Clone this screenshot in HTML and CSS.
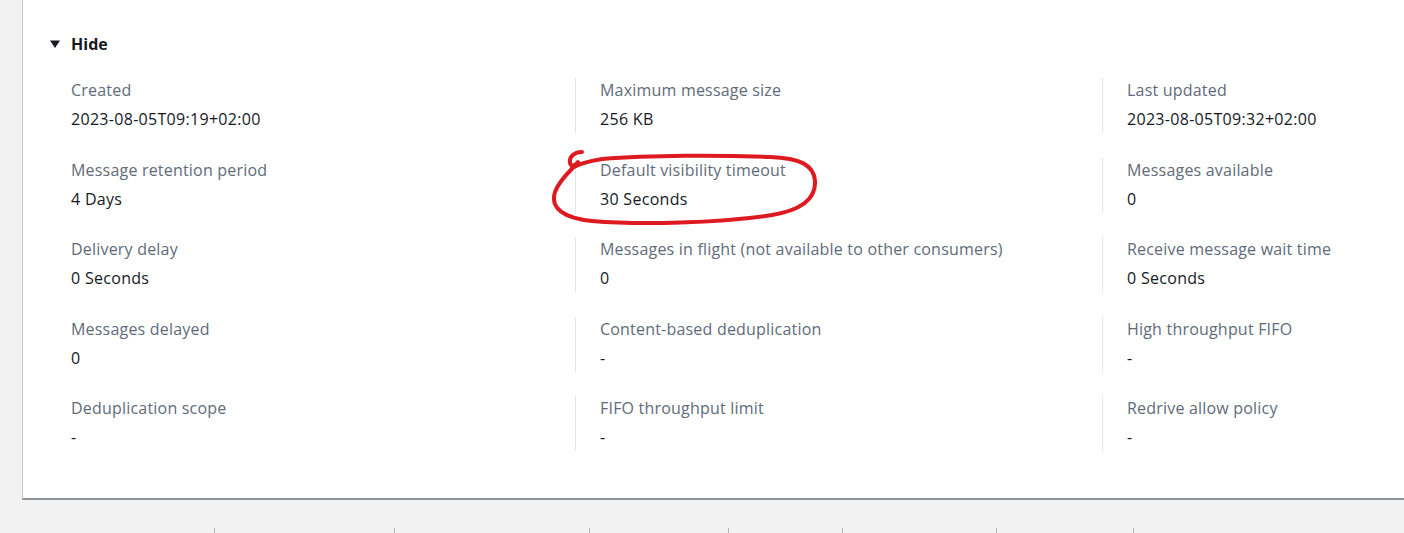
FILE: index.html
```html
<!DOCTYPE html>
<html>
<head>
<meta charset="utf-8">
<link rel="stylesheet" href="styles.css">
</head>
<body>
<div class="page">
  <div class="card">
    <div class="expander">
      <svg class="caret" width="12" height="12" viewBox="0 0 12 12"><polygon points="1,2.5 11,2.5 6,10" fill="#16191f"/></svg>
      <span class="expander-title">Hide</span>
    </div>
    <div class="kv-grid">
      <div class="kv"><div class="k">Created</div><div class="v">2023-08-05T09:19+02:00</div></div>
      <div class="kv sep"><div class="k">Maximum message size</div><div class="v">256 KB</div></div>
      <div class="kv sep"><div class="k">Last updated</div><div class="v">2023-08-05T09:32+02:00</div></div>

      <div class="kv"><div class="k">Message retention period</div><div class="v">4 Days</div></div>
      <div class="kv sep"><div class="k">Default visibility timeout</div><div class="v">30 Seconds</div></div>
      <div class="kv sep"><div class="k">Messages available</div><div class="v">0</div></div>

      <div class="kv"><div class="k">Delivery delay</div><div class="v">0 Seconds</div></div>
      <div class="kv sep"><div class="k">Messages in flight (not available to other consumers)</div><div class="v">0</div></div>
      <div class="kv sep"><div class="k">Receive message wait time</div><div class="v">0 Seconds</div></div>

      <div class="kv"><div class="k">Messages delayed</div><div class="v">0</div></div>
      <div class="kv sep"><div class="k">Content-based deduplication</div><div class="v">-</div></div>
      <div class="kv sep"><div class="k">High throughput FIFO</div><div class="v">-</div></div>

      <div class="kv"><div class="k">Deduplication scope</div><div class="v">-</div></div>
      <div class="kv sep"><div class="k">FIFO throughput limit</div><div class="v">-</div></div>
      <div class="kv sep"><div class="k">Redrive allow policy</div><div class="v">-</div></div>
    </div>
  </div>
  <div class="ticks">
    <span class="tick t1"></span>
    <span class="tick t2"></span>
    <span class="tick t3"></span>
    <span class="tick t4"></span>
    <span class="tick t5"></span>
    <span class="tick t6"></span>
    <span class="tick t7"></span>
  </div>
  <svg class="annotation" width="1404" height="533" viewBox="0 0 1404 533">
    <path d="M582,152 C575,152 569,156 570,163 C571,167 575,166 578,162 C575,167 560,178 555,192 C550,208 563,218 592,221 C640,225 720,223 772,215 C802,210 816,198 815,181 C814,165 800,158 770,157 C720,155 650,155 602,159 C590,161 580,163 572,168"
      fill="none" stroke="#dc1a1f" stroke-width="4" stroke-linecap="round" stroke-linejoin="round"/>
  </svg>
</div>
</body>
</html>
```

FILE: styles.css
```css
html, body {
  margin: 0;
  padding: 0;
  background: #f2f2f2;
  overflow: hidden;
}

.page {
  position: relative;
  width: 1404px;
  height: 533px;
  padding-left: 22px;
  box-sizing: border-box;
  overflow: hidden;
  font-family: "Open Sans", "Noto Sans", sans-serif;
  font-size: 16px;
  color: #16191f;
}

.card {
  width: 1382px;
  height: 500px;
  box-sizing: border-box;
  background: #ffffff;
  border-left: 1px solid #c6c6c6;
  border-bottom: 2px solid #8e9294;
  padding: 33px 0 0 25px;
}

.expander {
  display: flex;
  align-items: center;
  gap: 10px;
  height: 22px;
  margin-left: 1px;
}

.caret {
  display: block;
}

.expander-title {
  font-weight: 700;
  line-height: 22px;
}

.kv-grid {
  display: grid;
  grid-template-columns: 527px 527px 527px;
  row-gap: 24.5px;
  margin-top: 23px;
}

.kv {
  height: 55px;
  padding-left: 23px;
  padding-top: 1px;
  box-sizing: border-box;
  white-space: nowrap;
}

.kv.sep {
  border-left: 1px solid #e3e5e6;
  padding-left: 24px;
}

.k {
  color: #5f6b7a;
  line-height: 22px;
  margin-bottom: 7px;
  letter-spacing: 0.2px;
}

.v {
  line-height: 22px;
  letter-spacing: 0.3px;
}

.ticks {
  position: relative;
  height: 33px;
}

.tick {
  position: absolute;
  bottom: 0;
  width: 1px;
  height: 5px;
  background: #b4b4b4;
}

.t1 { left: 192px; }
.t2 { left: 372px; }
.t3 { left: 567px; }
.t4 { left: 706px; }
.t5 { left: 820px; }
.t6 { left: 974px; }
.t7 { left: 1111px; }

.annotation {
  position: absolute;
  left: 0;
  top: 0;
  pointer-events: none;
}
```
